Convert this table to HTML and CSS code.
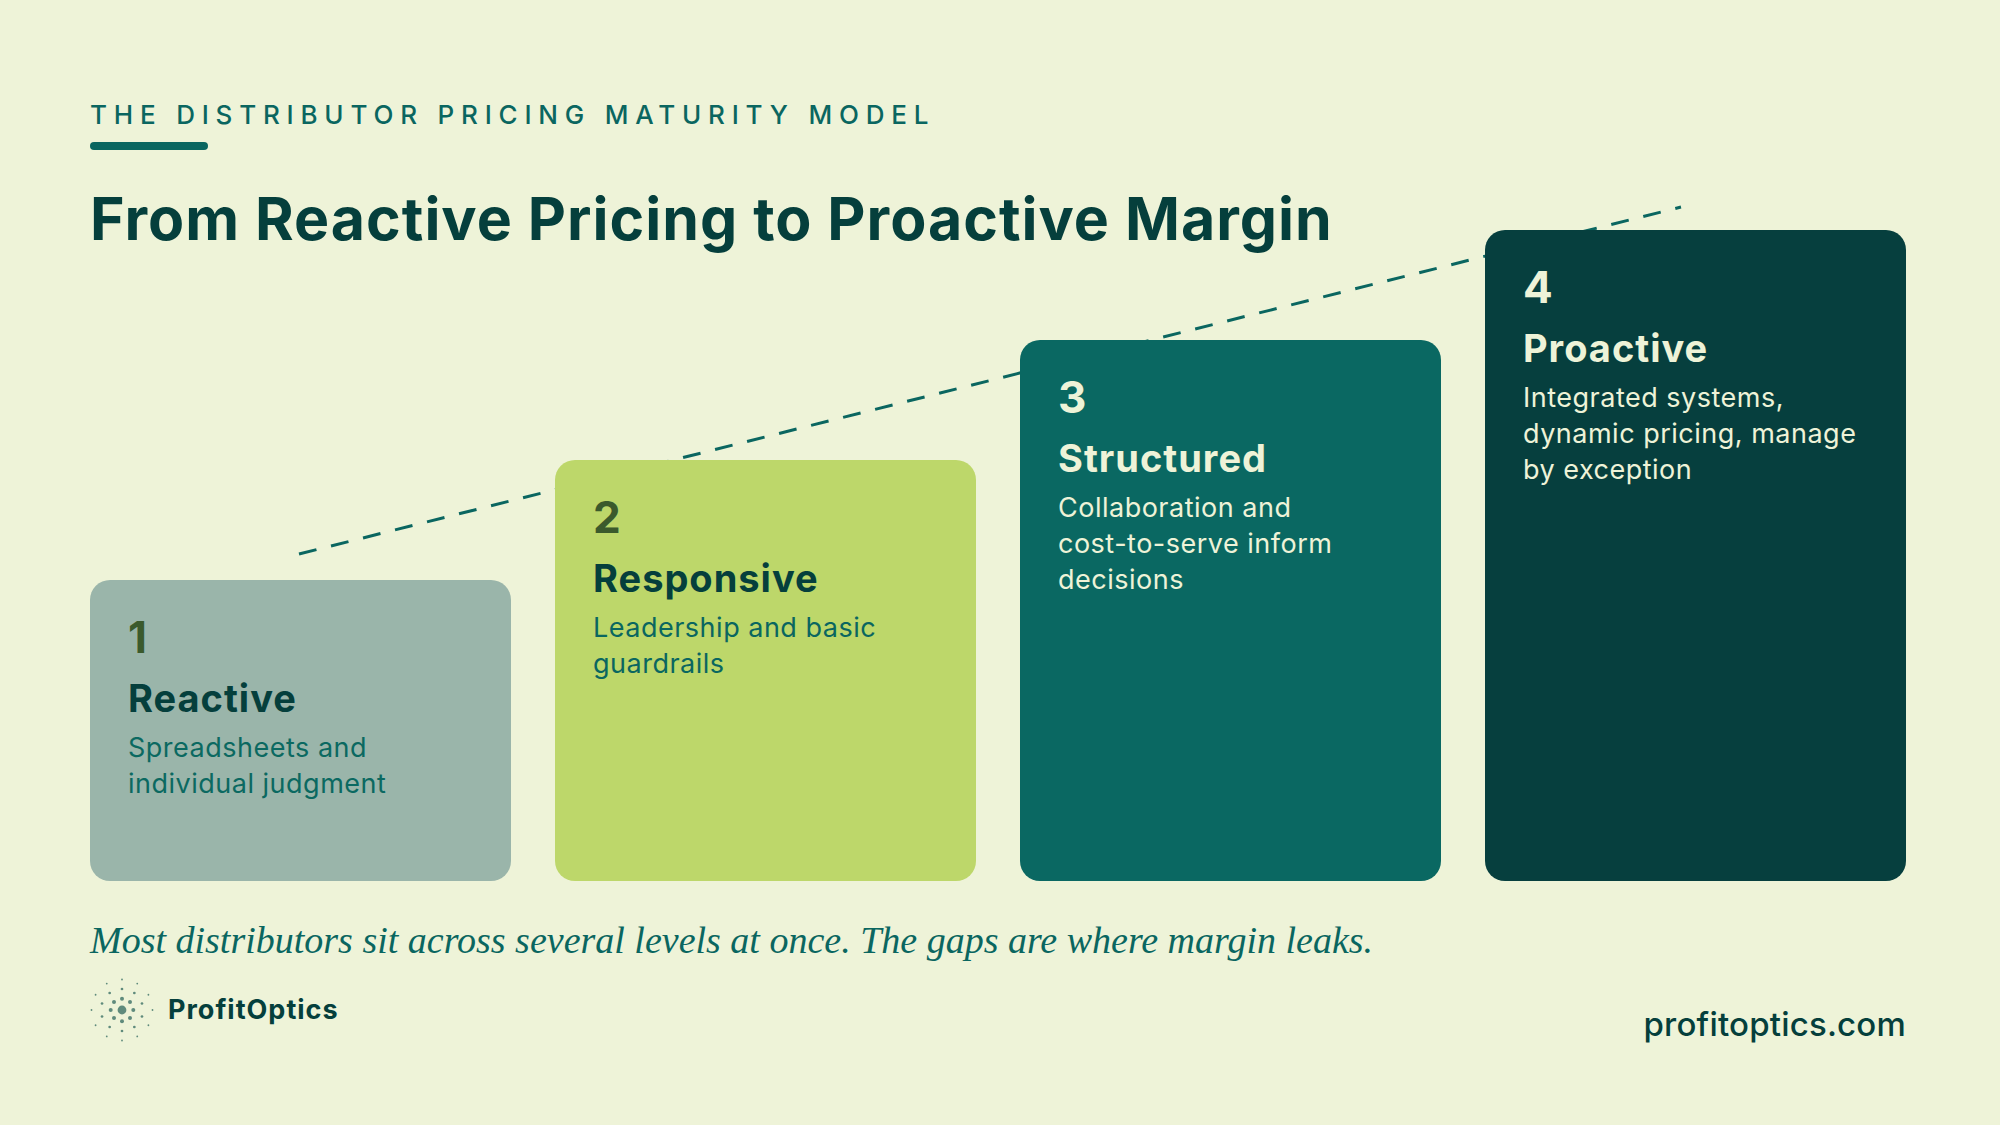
FILE: index.html
```html
<!DOCTYPE html>
<html lang="en">
<head>
<meta charset="utf-8">
<title>The Distributor Pricing Maturity Model</title>
<link rel="stylesheet" href="styles.css">
</head>
<body>
<div class="page">
  <svg class="trend" width="2000" height="1125" viewBox="0 0 2000 1125" aria-hidden="true">
    <line x1="299" y1="554" x2="1681" y2="207" stroke="#0a6660" stroke-width="3" stroke-dasharray="18 15"/>
  </svg>

  <header class="header">
    <div class="eyebrow">THE DISTRIBUTOR PRICING MATURITY MODEL</div>
    <div class="rule"></div>
    <h1 class="title">From Reactive Pricing to Proactive Margin</h1>
  </header>

  <section class="steps">
    <article class="card lvl-1">
      <div class="num">1</div>
      <h2 class="name">Reactive</h2>
      <p class="desc">Spreadsheets and<br>individual judgment</p>
    </article>
    <article class="card lvl-2">
      <div class="num">2</div>
      <h2 class="name">Responsive</h2>
      <p class="desc">Leadership and basic<br>guardrails</p>
    </article>
    <article class="card lvl-3">
      <div class="num">3</div>
      <h2 class="name">Structured</h2>
      <p class="desc">Collaboration and<br>cost-to-serve inform<br>decisions</p>
    </article>
    <article class="card lvl-4">
      <div class="num">4</div>
      <h2 class="name">Proactive</h2>
      <p class="desc">Integrated systems,<br>dynamic pricing, manage<br>by exception</p>
    </article>
  </section>

  <footer class="footer">
    <div class="footer-left">
      <p class="tagline">Most distributors sit across several levels at once. The gaps are where margin leaks.</p>
      <div class="brand">
        <svg class="brand-icon" width="64" height="64" viewBox="0 0 64 64" aria-hidden="true">
          <g fill="#5f8b7c">
            <circle cx="32" cy="32" r="4.4"/>
            <circle cx="43.3" cy="32" r="2"/>
            <circle cx="40" cy="24" r="2"/>
            <circle cx="32" cy="20.7" r="2"/>
            <circle cx="24" cy="24" r="2"/>
            <circle cx="20.7" cy="32" r="2"/>
            <circle cx="24" cy="40" r="2"/>
            <circle cx="32" cy="43.3" r="2"/>
            <circle cx="40" cy="40" r="2"/>
            <circle cx="51.97" cy="25.51" r="1.35"/>
            <circle cx="44.35" cy="15.01" r="1.35"/>
            <circle cx="32" cy="11" r="1.35"/>
            <circle cx="19.65" cy="15.01" r="1.35"/>
            <circle cx="12.03" cy="25.51" r="1.35"/>
            <circle cx="12.03" cy="38.49" r="1.35"/>
            <circle cx="19.65" cy="48.99" r="1.35"/>
            <circle cx="32" cy="53" r="1.35"/>
            <circle cx="44.35" cy="48.99" r="1.35"/>
            <circle cx="51.97" cy="38.49" r="1.35"/>
            <circle cx="62.5" cy="32" r="0.9"/>
            <circle cx="58.41" cy="16.75" r="0.9"/>
            <circle cx="47.25" cy="5.59" r="0.9"/>
            <circle cx="32" cy="1.5" r="0.9"/>
            <circle cx="16.75" cy="5.59" r="0.9"/>
            <circle cx="5.59" cy="16.75" r="0.9"/>
            <circle cx="1.5" cy="32" r="0.9"/>
            <circle cx="5.59" cy="47.25" r="0.9"/>
            <circle cx="16.75" cy="58.41" r="0.9"/>
            <circle cx="32" cy="62.5" r="0.9"/>
            <circle cx="47.25" cy="58.41" r="0.9"/>
            <circle cx="58.41" cy="47.25" r="0.9"/>
          </g>
        </svg>
        <span class="brand-name">ProfitOptics</span>
      </div>
    </div>
    <div class="url">profitoptics.com</div>
  </footer>
</div>
</body>
</html>
```

FILE: styles.css
```css
* { box-sizing: border-box; }

html, body {
  margin: 0;
  padding: 0;
}

body {
  background: #eef3d8;
  font-family: "Inter", "Noto Sans", "DejaVu Sans", sans-serif;
}

.page {
  position: relative;
  width: 2000px;
  height: 1125px;
  padding: 99px 94px 0 90px;
  background: #eef3d8;
  overflow: hidden;
}

.trend {
  position: absolute;
  left: 0;
  top: 0;
  z-index: 0;
}

.header {
  position: relative;
  z-index: 1;
}

.eyebrow {
  font-size: 26px;
  line-height: 32px;
  font-weight: 500;
  letter-spacing: 6.8px;
  color: #0a6660;
  white-space: nowrap;
}

.rule {
  width: 118px;
  height: 8px;
  margin-top: 11px;
  border-radius: 4px;
  background: #0a6660;
}

.title {
  margin: 34px 0 0;
  font-size: 59px;
  line-height: 70px;
  font-weight: 700;
  letter-spacing: 1px;
  color: #053f3c;
  white-space: nowrap;
}

.steps {
  position: relative;
  z-index: 1;
  display: flex;
  align-items: flex-end;
  gap: 44px;
  margin-top: -24px;
}

.card {
  width: 421px;
  flex: 0 0 421px;
  border-radius: 20px;
  padding: 31px 38px 0;
}

.lvl-1 { height: 301px; background: #9ab5aa; }
.lvl-2 { height: 421px; background: #bdd76a; }
.lvl-3 { height: 541px; background: #0a6862; }
.lvl-4 { height: 651px; background: #063f3e; }

.num {
  font-size: 44px;
  line-height: 52px;
  font-weight: 700;
}

.name {
  margin: 12px 0 0;
  font-size: 38px;
  line-height: 46px;
  font-weight: 700;
  letter-spacing: 1px;
}

.desc {
  margin: 9px 0 0;
  font-size: 27px;
  line-height: 36px;
  font-weight: 400;
  letter-spacing: 0.5px;
  white-space: nowrap;
}

.lvl-1 .num, .lvl-2 .num { color: #3b5a2c; }
.lvl-1 .name, .lvl-2 .name { color: #053f3c; }
.lvl-1 .desc { color: #0b6961; }
.lvl-2 .desc { color: #0a6660; }
.lvl-3 .num, .lvl-3 .name, .lvl-3 .desc,
.lvl-4 .num, .lvl-4 .name, .lvl-4 .desc { color: #eef3d8; }

.footer {
  position: relative;
  z-index: 1;
  display: flex;
  justify-content: space-between;
  align-items: flex-end;
  margin-top: 37px;
}

.tagline {
  margin: 0;
  font-family: "Liberation Serif", "DejaVu Serif", serif;
  font-style: italic;
  font-size: 38px;
  line-height: 44px;
  color: #0a6660;
  white-space: nowrap;
}

.brand {
  display: flex;
  align-items: center;
  gap: 14px;
  margin-top: 16px;
}

.brand-icon {
  display: block;
  flex: 0 0 64px;
}

.brand-name {
  font-size: 27px;
  line-height: 32px;
  font-weight: 700;
  letter-spacing: 1px;
  color: #053f3c;
}

.url {
  font-size: 33px;
  line-height: 36px;
  font-weight: 500;
  letter-spacing: 0.2px;
  color: #053f3c;
  white-space: nowrap;
}
```
